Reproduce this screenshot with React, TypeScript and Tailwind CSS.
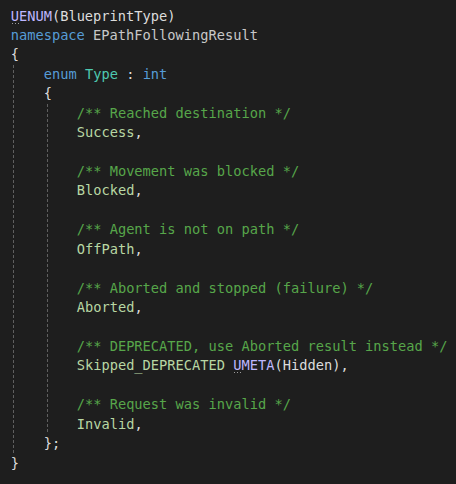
import React from 'react';

const C = {
  kw: 'text-[#569cd6]',
  type: 'text-[#4ec9b0]',
  cm: 'text-[#57a64a]',
  en: 'text-[#b8d7a3]',
  mac: 'text-[#beb7ff]',
  ns: 'text-[#c8c8c8]',
  txt: 'text-[#dcdcdc]',
};

const guide =
  'absolute top-0 bottom-0 w-px bg-[linear-gradient(to_bottom,#5f5f5f_60%,transparent_60%)] bg-[length:1px_5px]';

function Line({ children }: { children?: React.ReactNode }) {
  return <div className="h-[19.45px] whitespace-pre">{children ?? ' '}</div>;
}

// the little "..." hint marks under a macro's first letter
function Hinted({ letter }: { letter: string }) {
  return (
    <span className="relative">
      {letter}
      <span className="absolute left-[1px] top-[15px] flex gap-[2px]">
        <span className="h-px w-px bg-[#9a9a9a]" />
        <span className="h-px w-px bg-[#9a9a9a]" />
        <span className="h-px w-px bg-[#9a9a9a]" />
      </span>
    </span>
  );
}

function Member({ comment, name }: { comment: string; name: React.ReactNode }) {
  return (
    <>
      <Line>
        <span className={C.cm}>{`/** ${comment} */`}</span>
      </Line>
      <Line>{name}</Line>
    </>
  );
}

export default function App() {
  return (
    <div className="h-[484px] w-[456px] overflow-hidden bg-[#1e1e1e] pl-[10.7px] pt-[6.5px] font-['DejaVu_Sans_Mono',monospace] text-[13.7px] leading-[19.45px] text-[#dcdcdc]">
      <Line>
        <span className={C.mac}>
          <Hinted letter="U" />
          ENUM
        </span>
        <span className={C.txt}>(BlueprintType)</span>
      </Line>
      <Line>
        <span className={C.kw}>namespace</span> <span className={C.ns}>EPathFollowingResult</span>
      </Line>
      <Line>{'{'}</Line>

      <div className="relative pl-[33px]">
        <div className={`${guide} left-[2.5px]`} />
        <Line>
          <span className={C.kw}>enum</span> <span className={C.type}>Type</span>{' '}
          <span className={C.txt}>:</span> <span className={C.kw}>int</span>
        </Line>
        <Line>{'{'}</Line>

        <div className="relative pl-[33px]">
          <div className={`${guide} left-[3.5px]`} />
          <Member comment="Reached destination" name={<><span className={C.en}>Success</span>,</>} />
          <Line />
          <Member comment="Movement was blocked" name={<><span className={C.en}>Blocked</span>,</>} />
          <Line />
          <Member comment="Agent is not on path" name={<><span className={C.en}>OffPath</span>,</>} />
          <Line />
          <Member comment="Aborted and stopped (failure)" name={<><span className={C.en}>Aborted</span>,</>} />
          <Line />
          <Member
            comment="DEPRECATED, use Aborted result instead"
            name={
              <>
                <span className={C.en}>Skipped_DEPRECATED</span>{' '}
                <span className={C.mac}>
                  <Hinted letter="U" />
                  META
                </span>
                (Hidden),
              </>
            }
          />
          <Line />
          <Member comment="Request was invalid" name={<><span className={C.en}>Invalid</span>,</>} />
        </div>

        <Line>{'};'}</Line>
      </div>

      <Line>{'}'}</Line>
    </div>
  );
}
